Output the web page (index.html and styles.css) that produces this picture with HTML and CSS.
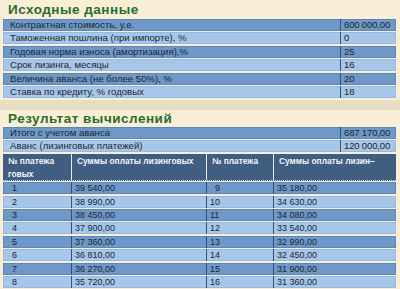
FILE: index.html
```html
<!DOCTYPE html>
<html lang="ru">
<head>
<meta charset="utf-8">
<link rel="stylesheet" href="styles.css">
</head>
<body>
<div class="page">
  <section class="panel">
    <h2 class="title">Исходные данные</h2>
    <div class="rows">
      <div class="row dark"><span class="label">Контрактная стоимость, у.е.</span><span class="val">600 000,00</span></div>
      <div class="row light"><span class="label">Таможенная пошлина (при импорте), %</span><span class="val">0</span></div>
      <div class="row dark"><span class="label">Годовая норма износа (амортизация),%</span><span class="val">25</span></div>
      <div class="row light"><span class="label">Срок лизинга, месяцы</span><span class="val">16</span></div>
      <div class="row dark"><span class="label">Величина аванса (не более 50%), %</span><span class="val">20</span></div>
      <div class="row light"><span class="label">Ставка по кредиту, % годовых</span><span class="val">18</span></div>
    </div>
  </section>
  <div class="band"></div>
  <section class="panel second">
    <h2 class="title">Результат вычислений</h2>
    <div class="rows">
      <div class="row dark"><span class="label">Итого с учетом аванса</span><span class="val">687 170,00</span></div>
      <div class="row light"><span class="label">Аванс (лизинговых платежей)</span><span class="val">120 000,00</span></div>
    </div>
    <div class="table">
      <div class="thead">
        <div class="th">№ платежа<br>говых</div>
        <div class="th">Суммы оплаты лизинговых</div>
        <div class="th">№ платежа</div>
        <div class="th">Суммы оплаты лизин–</div>
      </div>
      <div class="tr dark"><div class="td n">1</div><div class="td">39 540,00</div><div class="td n2">9</div><div class="td">35 180,00</div></div>
      <div class="tr light"><div class="td n">2</div><div class="td">38 990,00</div><div class="td">10</div><div class="td">34 630,00</div></div>
      <div class="tr dark"><div class="td n">3</div><div class="td">38 450,00</div><div class="td">11</div><div class="td">34 080,00</div></div>
      <div class="tr light"><div class="td n">4</div><div class="td">37 900,00</div><div class="td">12</div><div class="td">33 540,00</div></div>
      <div class="tr dark"><div class="td n">5</div><div class="td">37 360,00</div><div class="td">13</div><div class="td">32 990,00</div></div>
      <div class="tr light"><div class="td n">6</div><div class="td">36 810,00</div><div class="td">14</div><div class="td">32 450,00</div></div>
      <div class="tr dark"><div class="td n">7</div><div class="td">36 270,00</div><div class="td">15</div><div class="td">31 900,00</div></div>
      <div class="tr light"><div class="td n">8</div><div class="td">35 720,00</div><div class="td">16</div><div class="td">31 360,00</div></div>
    </div>
  </section>
</div>
</body>
</html>
```
FILE: styles.css
```css
* { box-sizing: border-box; }
html, body { margin: 0; padding: 0; }
body {
  width: 400px;
  height: 289px;
  overflow: hidden;
  background: #f8efd6;
  font-family: "Liberation Sans", Arial, sans-serif;
  color: #22262e;
}
.page { display: flex; flex-direction: column; }
.panel { padding: 0 4px 0 3px; background: #f8efd6; }
.title {
  margin: 0;
  height: 19px;
  padding: 3px 0 0 5px;
  font-size: 13.5px;
  line-height: 14px;
  font-weight: bold;
  color: #2d6a2b;
  letter-spacing: 0.5px;
}
.second .title { height: 17px; padding-top: 2px; }
.rows { display: flex; flex-direction: column; gap: 1.4px; }
.row {
  display: flex;
  height: 12px;
  font-size: 9.6px;
  line-height: 12px;
}
.dark { background: #6d98c9; box-shadow: inset 0 0 0 1px #5a87bd; }
.light { background: #a6c6ea; box-shadow: inset 0 0 0 1px #96b9e2; }
.label { flex: 1; padding-left: 7px; white-space: nowrap; }
.val {
  width: 56px;
  padding-left: 3px;
  border-left: 1px solid #2e5282;
  white-space: nowrap;
  letter-spacing: -0.2px;
}
.band { height: 10px; background: #e8dec2; margin-top: 2px; }
.table { margin-top: 1.5px; display: flex; flex-direction: column; gap: 1.4px; }
.thead, .tr {
  display: grid;
  grid-template-columns: 69px 135px 67px 1fr;
}
.thead {
  background: #405d82;
  height: 27px;
  border-bottom: 1px dotted #c9d6e6;
}
.th {
  color: #f2f4f8;
  font-weight: bold;
  font-size: 8.4px;
  line-height: 13px;
  padding: 1px 0 0 5px;
  border-right: 1px solid #e6ecf4;
  white-space: nowrap;
  overflow: hidden;
}
.th:last-child { border-right: 0; }
.tr { height: 12px; font-size: 9px; line-height: 12px; }
.td { padding-left: 3px; border-right: 1px solid #2e5282; white-space: nowrap; }
.td:last-child { border-right: 0; }
.td.n { padding-left: 9px; }
.td.n2 { padding-left: 8px; }
```
